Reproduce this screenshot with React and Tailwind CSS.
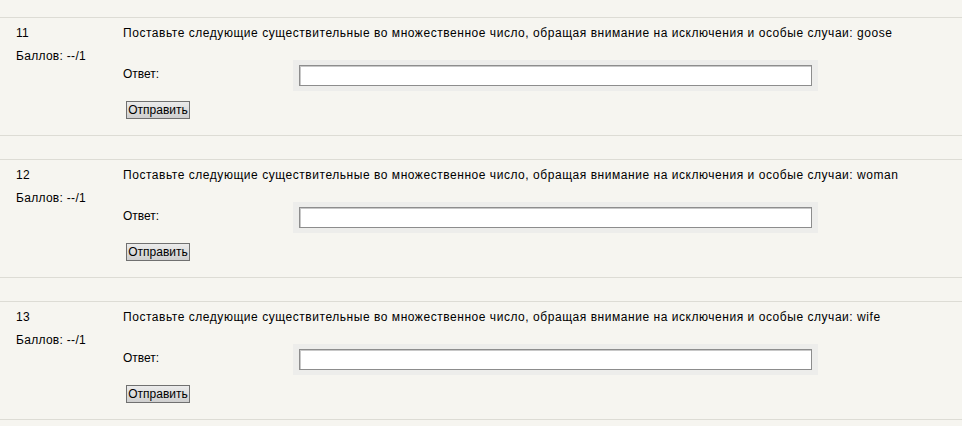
import React from "react";

const items = [
  { n: "11", word: "goose" },
  { n: "12", word: "woman" },
  { n: "13", word: "wife" },
];

function Question({ n, word, first }) {
  return (
    <div
      className={`flex border-t border-b border-[#dddcd5] ${first ? "mt-[17px]" : "mt-[23px]"}`}
    >
      <div className="w-[123px] shrink-0 pl-[16px] pt-[8px]">
        <div className="leading-[14px] tracking-[0.3px]">{n}</div>
        <div className="leading-[14px] mt-[9px] tracking-[0.3px]">Баллов: --/1</div>
      </div>
      <div className="flex flex-col pt-[8px] pb-[16px]">
        <div className="leading-[14px] whitespace-nowrap tracking-[0.54px]">
          Поставьте следующие существительные во множественное число, обращая внимание на исключения и особые случаи: {word}
        </div>
        <div className="flex items-start mt-[20px]">
          <div className="w-[170px] pt-[7px] leading-[14px]">Ответ:</div>
          <div className="w-[525px] bg-[#ededeb] px-[6px] pt-[5px] pb-[5px]">
            <div className="h-[21px] bg-white border border-[#8d8d8d] shadow-[inset_1px_1px_0_#c8c8c8]" />
          </div>
        </div>
        <div className="mt-[10px] ml-[3px]">
          <div className="w-[64px] h-[18px] flex items-center justify-center border border-[#707070] bg-gradient-to-b from-[#ebebeb] to-[#cfcfcf] leading-[14px] text-black">
            Отправить
          </div>
        </div>
      </div>
    </div>
  );
}

export default function App() {
  return (
    <div
      className="w-[962px] h-[426px] overflow-hidden bg-[#f6f5f0] text-[12px] text-black"
      style={{ fontFamily: '"Liberation Sans", Arial, sans-serif' }}
    >
      <div className="pt-0">
        {items.map((it, i) => (
          <Question key={it.n} n={it.n} word={it.word} first={i === 0} />
        ))}
      </div>
    </div>
  );
}
